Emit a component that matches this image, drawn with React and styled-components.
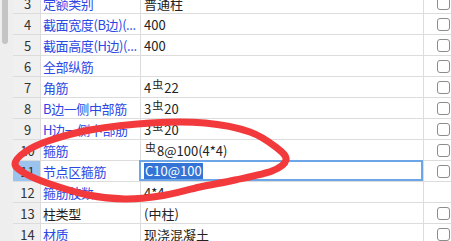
import styled, { createGlobalStyle } from "styled-components";

const GlobalStyle = createGlobalStyle`
  html, body {
    margin: 0;
    padding: 0;
    background: #ffffff;
    overflow: hidden;
  }
  body {
    font-family: "Noto Sans CJK SC", "Noto Sans", sans-serif;
    font-size: 13px;
  }
`;

const Page = styled.div`
  position: relative;
  width: 451px;
  height: 241px;
  overflow: hidden;
  display: flex;
`;

const ScrollTrack = styled.div`
  width: 13px;
  flex: none;
  background: #eeeeee;
`;

const ScrollThumb = styled.div`
  width: 6px;
  height: 44px;
  margin-left: 2px;
  background: #c4c4c4;
  border-radius: 0 0 3px 3px;
`;

const Grid = styled.div`
  flex: 1;
  display: grid;
  grid-template-columns: 28px 100px 283px 1fr;
  grid-auto-rows: 21px;
  margin-top: -7px;
  align-content: start;
`;

const Cell = styled.div`
  box-sizing: border-box;
  border-right: 1px solid #dcdcdc;
  border-bottom: 1px solid #dcdcdc;
  display: flex;
  align-items: center;
  white-space: nowrap;
  overflow: hidden;
  color: #222222;
`;

const NumCell = styled(Cell)`
  justify-content: center;
  background: ${(p) => (p.$active ? "#9cc2ee" : "#f0f0f0")};
  color: #333333;
  padding-left: 2px;
`;

const NameCell = styled(Cell)`
  padding-left: 2px;
  letter-spacing: -0.4px;
  color: ${(p) => (p.$plain ? "#1e1e1e" : "#2d47e4")};
`;

const ValueCell = styled(Cell)`
  position: relative;
  padding-left: 3px;
  overflow: visible;

  ${(p) =>
    p.$selected &&
    `
    &::after {
      content: "";
      position: absolute;
      top: -1px;
      left: -2px;
      right: 0;
      bottom: 0;
      border: 2px solid #6ca6e6;
      pointer-events: none;
    }
  `}
`;

const Selection = styled.span`
  background: #3474d6;
  color: #ffffff;
  line-height: 16px;
  padding: 0 1px;
`;

const Rebar = styled.span`
  font-size: 11px;
  position: relative;
  top: -3px;
  margin: 0 1px;
`;

const CheckCell = styled(Cell)`
  border-right: none;
  padding-left: 13px;
`;

const CheckBox = styled.div`
  box-sizing: border-box;
  width: 13px;
  height: 13px;
  border: 1px solid #8c8c8c;
  border-radius: 3px;
  background: #ffffff;
`;

const Marker = styled.svg`
  position: absolute;
  left: 0;
  top: 0;
  pointer-events: none;
`;

const R = "虫";

const rows = [
  { n: 3, name: "定额类别", value: "普通柱" },
  { n: 4, name: "截面宽度(B边)(...", value: "400" },
  { n: 5, name: "截面高度(H边)(...", value: "400" },
  { n: 6, name: "全部纵筋", value: "" },
  { n: 7, name: "角筋", value: ["4", R, "22"] },
  { n: 8, name: "B边一侧中部筋", value: ["3", R, "20"] },
  { n: 9, name: "H边一侧中部筋", value: ["3", R, "20"] },
  { n: 10, name: "箍筋", value: ["", R, "8@100(4*4)"] },
  { n: 11, name: "节点区箍筋", value: "C10@100", selected: true },
  { n: 12, name: "箍筋肢数", value: "4*4", noCheck: true },
  { n: 13, name: "柱类型", value: "(中柱)", plain: true },
  { n: 14, name: "材质", value: "现浇混凝土" },
  { n: 15, name: "混凝土类型", value: "" },
];

// hand-drawn loop, closed catmull-rom through these points
const loop = [
  [15, 164], [25, 152], [48, 141], [90, 130], [150, 123], [205, 123],
  [250, 132], [277, 148], [286, 160], [272, 171], [235, 180], [200, 187],
  [160, 196], [125, 199], [88, 195], [50, 184], [26, 174],
];

const smoothPath = (pts) => {
  const n = pts.length;
  let d = `M${pts[0][0]},${pts[0][1]}`;
  for (let i = 0; i < n; i++) {
    const p0 = pts[(i - 1 + n) % n];
    const p1 = pts[i];
    const p2 = pts[(i + 1) % n];
    const p3 = pts[(i + 2) % n];
    const c1 = [p1[0] + (p2[0] - p0[0]) / 6, p1[1] + (p2[1] - p0[1]) / 6];
    const c2 = [p2[0] - (p3[0] - p1[0]) / 6, p2[1] - (p3[1] - p1[1]) / 6];
    d += ` C${c1[0]},${c1[1]} ${c2[0]},${c2[1]} ${p2[0]},${p2[1]}`;
  }
  return d + " Z";
};

const renderValue = (row) => {
  if (row.selected) return <Selection>{row.value}</Selection>;
  if (Array.isArray(row.value)) {
    const [a, sym, b] = row.value;
    return (
      <>
        {a}
        <Rebar>{sym}</Rebar>
        {b}
      </>
    );
  }
  return row.value;
};

const App = () => {
  return (
    <Page>
      <GlobalStyle />
      <ScrollTrack>
        <ScrollThumb />
      </ScrollTrack>
      <Grid>
        {rows.map((row) => [
          <NumCell key={`n${row.n}`} $active={row.selected}>
            {row.n}
          </NumCell>,
          <NameCell key={`a${row.n}`} $plain={row.plain}>
            {row.name}
          </NameCell>,
          <ValueCell key={`v${row.n}`} $selected={row.selected}>
            {renderValue(row)}
          </ValueCell>,
          <CheckCell key={`c${row.n}`}>{!row.noCheck && <CheckBox />}</CheckCell>,
        ])}
      </Grid>
      <Marker width="451" height="241" viewBox="0 0 451 241">
        <path
          d={smoothPath(loop)}
          fill="none"
          stroke="#f23a3c"
          strokeWidth="7"
          strokeLinejoin="round"
        />
      </Marker>
    </Page>
  );
};

export default App;
